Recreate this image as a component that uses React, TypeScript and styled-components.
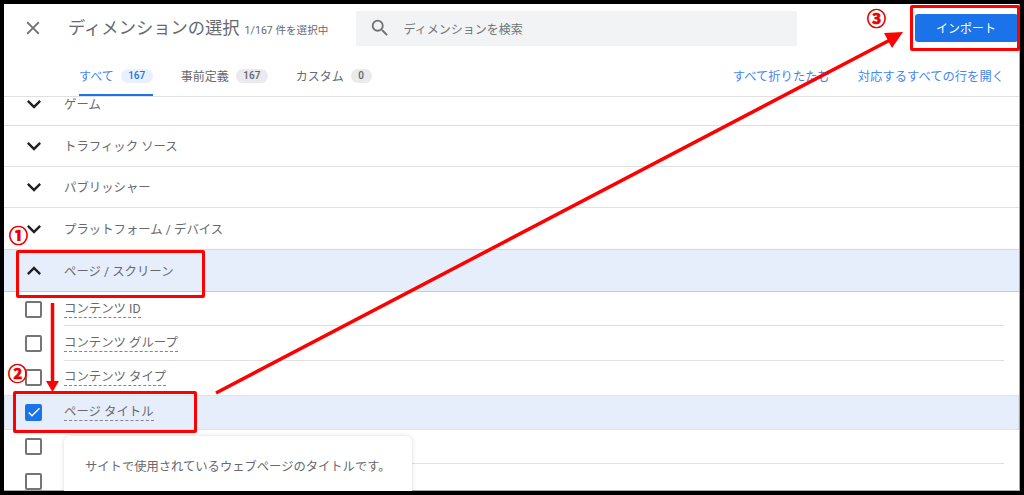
import React from 'react';
import styled, { createGlobalStyle } from 'styled-components';
import { MdClose, MdSearch, MdExpandMore, MdExpandLess, MdCheck } from 'react-icons/md';

const FONT = '"Roboto", "Noto Sans CJK JP", sans-serif';
const TEXT = '#66696d';

const Global = createGlobalStyle`
    html, body { margin: 0; padding: 0; background: #000; }
    * { box-sizing: border-box; }
`;

const Frame = styled.div`
    position: relative;
    width: 1024px;
    height: 495px;
    overflow: hidden;
    background: #000;
    padding: 4px;
    font-family: ${FONT};
`;

const Page = styled.main`
    height: 487px;
    background: #fff;
    overflow: hidden;
    border-right: 1px solid #a8a8a8;
    border-bottom: 1px solid #a8a8a8;
`;

const Header = styled.header`
    height: 48px;
    display: flex;
    align-items: center;
    padding-left: 18px;
`;

const Close = styled.span`
    display: flex;
    width: 22px;
    color: #6f7377;
    margin-right: 24px;
`;

const Title = styled.h1`
    flex: none;
    margin: 0 0 3px;
    font-size: 17.3px;
    font-weight: 400;
    color: ${TEXT};
    white-space: nowrap;
`;

const Counter = styled.span`
    flex: none;
    width: 111px;
    margin: 2px 0 0 5px;
    font-size: 10.6px;
    color: ${TEXT};
    white-space: nowrap;
`;

const SearchBox = styled.div`
    flex: none;
    width: 441px;
    height: 35px;
    display: flex;
    align-items: center;
    padding-left: 13px;
    gap: 13px;
    background: #f1f3f4;
    color: #6f7377;
    font-size: 12px;
`;

const ImportButton = styled.button`
    flex: none;
    margin: -1px 0 0 118px;
    width: 103px;
    height: 28px;
    border: 0;
    border-radius: 3px;
    background: #1a73e8;
    color: #fff;
    font: 400 12px ${FONT};
`;

const TabBar = styled.nav`
    height: 45px;
    display: flex;
    align-items: flex-start;
    padding: 15px 15px 0 75px;
    border-bottom: 1px solid #e0e0e0;
    font-size: 12px;
`;

const Tab = styled.div<{ $active?: boolean }>`
    position: relative;
    height: 29px;
    display: flex;
    align-items: flex-start;
    gap: 7px;
    margin-right: 28px;
    color: ${(p) => (p.$active ? '#4285f4' : TEXT)};
    white-space: nowrap;
    &::after {
        content: '';
        display: ${(p) => (p.$active ? 'block' : 'none')};
        position: absolute;
        left: 0;
        right: 0;
        bottom: 0;
        height: 2px;
        background: #1a73e8;
    }
`;

const Badge = styled.span<{ $active?: boolean }>`
    height: 14px;
    margin-top: 2px;
    padding: 0 7.5px;
    border-radius: 7px;
    font-size: 10px;
    font-weight: 500;
    line-height: 14px;
    background: ${(p) => (p.$active ? '#e8f0fe' : '#e8eaed')};
    color: ${(p) => (p.$active ? '#1a73e8' : '#5f6368')};
`;

const TabLink = styled.a`
    color: #4285f4;
    font-size: 12.3px;
    white-space: nowrap;
    margin-left: 28px;
    &:first-of-type { margin-left: auto; }
`;

const CategoryRow = styled.div<{ $open?: boolean; $height: number; $lift?: number }>`
    height: ${(p) => p.$height}px;
    display: flex;
    align-items: center;
    padding: 0 0 ${(p) => p.$lift ?? 0}px 16px;
    border-bottom: 1px solid ${(p) => (p.$open ? '#c8ccd0' : '#e0e0e0')};
    background: ${(p) => (p.$open ? '#e6eefb' : '#fff')};
    color: ${TEXT};
    font-size: 12.4px;
    ${(p) => p.$open && 'box-shadow: 0 1px 3px rgba(60,64,67,.3);'}
`;

const Chevron = styled.span`
    display: flex;
    width: 28px;
    margin-right: 16px;
    color: #202124;
`;

const ItemRow = styled.div<{ $selected?: boolean }>`
    height: 34.4px;
    display: flex;
    align-items: center;
    padding-left: 21px;
    background: ${(p) => (p.$selected ? '#e6eefb' : '#fff')};
    ${(p) => p.$selected && 'box-shadow: inset 0 0 0 1px #dde3ec;'}
`;

const Box = styled.span<{ $checked?: boolean }>`
    flex: none;
    display: flex;
    align-items: center;
    justify-content: center;
    width: 17px;
    height: 17px;
    border-radius: 2px;
    border: 2px solid ${(p) => (p.$checked ? '#1a73e8' : '#757575')};
    background: ${(p) => (p.$checked ? '#1a73e8' : '#fff')};
    color: #fff;
    svg { flex: none; }
`;

const ItemBody = styled.div<{ $line: boolean }>`
    flex: 1;
    height: 100%;
    display: flex;
    align-items: center;
    margin: 0 15px 0 22px;
    border-bottom: 1px solid ${(p) => (p.$line ? '#e0e0e0' : 'transparent')};
    color: ${TEXT};
    font-size: 12.4px;
`;

const Dotted = styled.span`
    border-bottom: 1px dashed #80868b;
    line-height: 17px;
`;

const Tooltip = styled.div`
    position: absolute;
    left: 64px;
    top: 436px;
    width: 348px;
    height: 70px;
    padding: 21px 21px;
    background: #fff;
    border-radius: 6px;
    box-shadow: 0 0 4px rgba(60, 64, 67, .2);
    color: ${TEXT};
    font-size: 12.3px;
    white-space: nowrap;
`;

const Highlight = styled.div<{ $x: number; $y: number; $w: number; $h: number }>`
    position: absolute;
    left: ${(p) => p.$x}px;
    top: ${(p) => p.$y}px;
    width: ${(p) => p.$w}px;
    height: ${(p) => p.$h}px;
    border: 3px solid #f00;
    border-radius: 2px;
`;

const Step = styled.span<{ $x: number; $y: number }>`
    position: absolute;
    left: ${(p) => p.$x}px;
    top: ${(p) => p.$y}px;
    color: #e60000;
    font: 700 19px/20px "Noto Sans CJK JP", sans-serif;
    -webkit-text-stroke: 0.7px #e60000;
`;

const Overlay = styled.svg`
    position: absolute;
    left: 0;
    top: 0;
    pointer-events: none;
`;

const BottomEdge = styled.div`
    position: absolute;
    left: 0;
    right: 0;
    bottom: 0;
    height: 4px;
    background: #000;
`;

const categories = [
    { label: 'ゲーム', height: 29, lift: 14 },
    { label: 'トラフィック ソース', height: 41 },
    { label: 'パブリッシャー', height: 41 },
    { label: 'プラットフォーム / デバイス', height: 42 },
];

const items = [
    { label: 'コンテンツ ID', line: true },
    { label: 'コンテンツ グループ', line: true },
    { label: 'コンテンツ タイプ', line: false },
    { label: 'ページ タイトル', selected: true, line: false },
    { label: '', line: true },
    { label: '', line: false },
];

function App() {
    return (
        <Frame>
            <Global />
            <Page>
                <Header>
                    <Close><MdClose size={22} /></Close>
                    <Title>ディメンションの選択</Title>
                    <Counter>1/167 件を選択中</Counter>
                    <SearchBox>
                        <MdSearch size={22} />
                        ディメンションを検索
                    </SearchBox>
                    <ImportButton>インポート</ImportButton>
                </Header>
                <TabBar>
                    <Tab $active>すべて<Badge $active>167</Badge></Tab>
                    <Tab>事前定義<Badge>167</Badge></Tab>
                    <Tab>カスタム<Badge>0</Badge></Tab>
                    <TabLink>すべて折りたたむ</TabLink>
                    <TabLink>対応するすべての行を開く</TabLink>
                </TabBar>
                {categories.map((c) => (
                    <CategoryRow key={c.label} $height={c.height} $lift={c.lift}>
                        <Chevron><MdExpandMore size={28} /></Chevron>
                        {c.label}
                    </CategoryRow>
                ))}
                <CategoryRow $open $height={42}>
                    <Chevron><MdExpandLess size={28} /></Chevron>
                    ページ / スクリーン
                </CategoryRow>
                {items.map((it, i) => (
                    <ItemRow key={i} $selected={it.selected}>
                        <Box $checked={it.selected}>
                            {it.selected && <MdCheck size={16} />}
                        </Box>
                        <ItemBody $line={it.line}>
                            {it.label && <Dotted>{it.label}</Dotted>}
                        </ItemBody>
                    </ItemRow>
                ))}
            </Page>
            <Tooltip>サイトで使用されているウェブページのタイトルです。</Tooltip>
            <BottomEdge />
            <Highlight $x={16} $y={250} $w={189} $h={48} />
            <Highlight $x={13} $y={391} $w={184} $h={42} />
            <Highlight $x={910} $y={5} $w={110} $h={46} />
            <Step $x={9} $y={225}>①</Step>
            <Step $x={8} $y={363}>②</Step>
            <Step $x={867} $y={8}>③</Step>
            <Overlay width={1024} height={495} viewBox="0 0 1024 495">
                <line x1={52.5} y1={303} x2={52.5} y2={382} stroke="#f00" strokeWidth={3.5} />
                <polygon points="46,381 59,381 52.5,392" fill="#f00" />
                <line x1={216} y1={393} x2={890} y2={40} stroke="#f00" strokeWidth={3.5} />
                <polygon points="903,32 884,33 892,48" fill="#f00" />
            </Overlay>
        </Frame>
    );
}

export default App;
